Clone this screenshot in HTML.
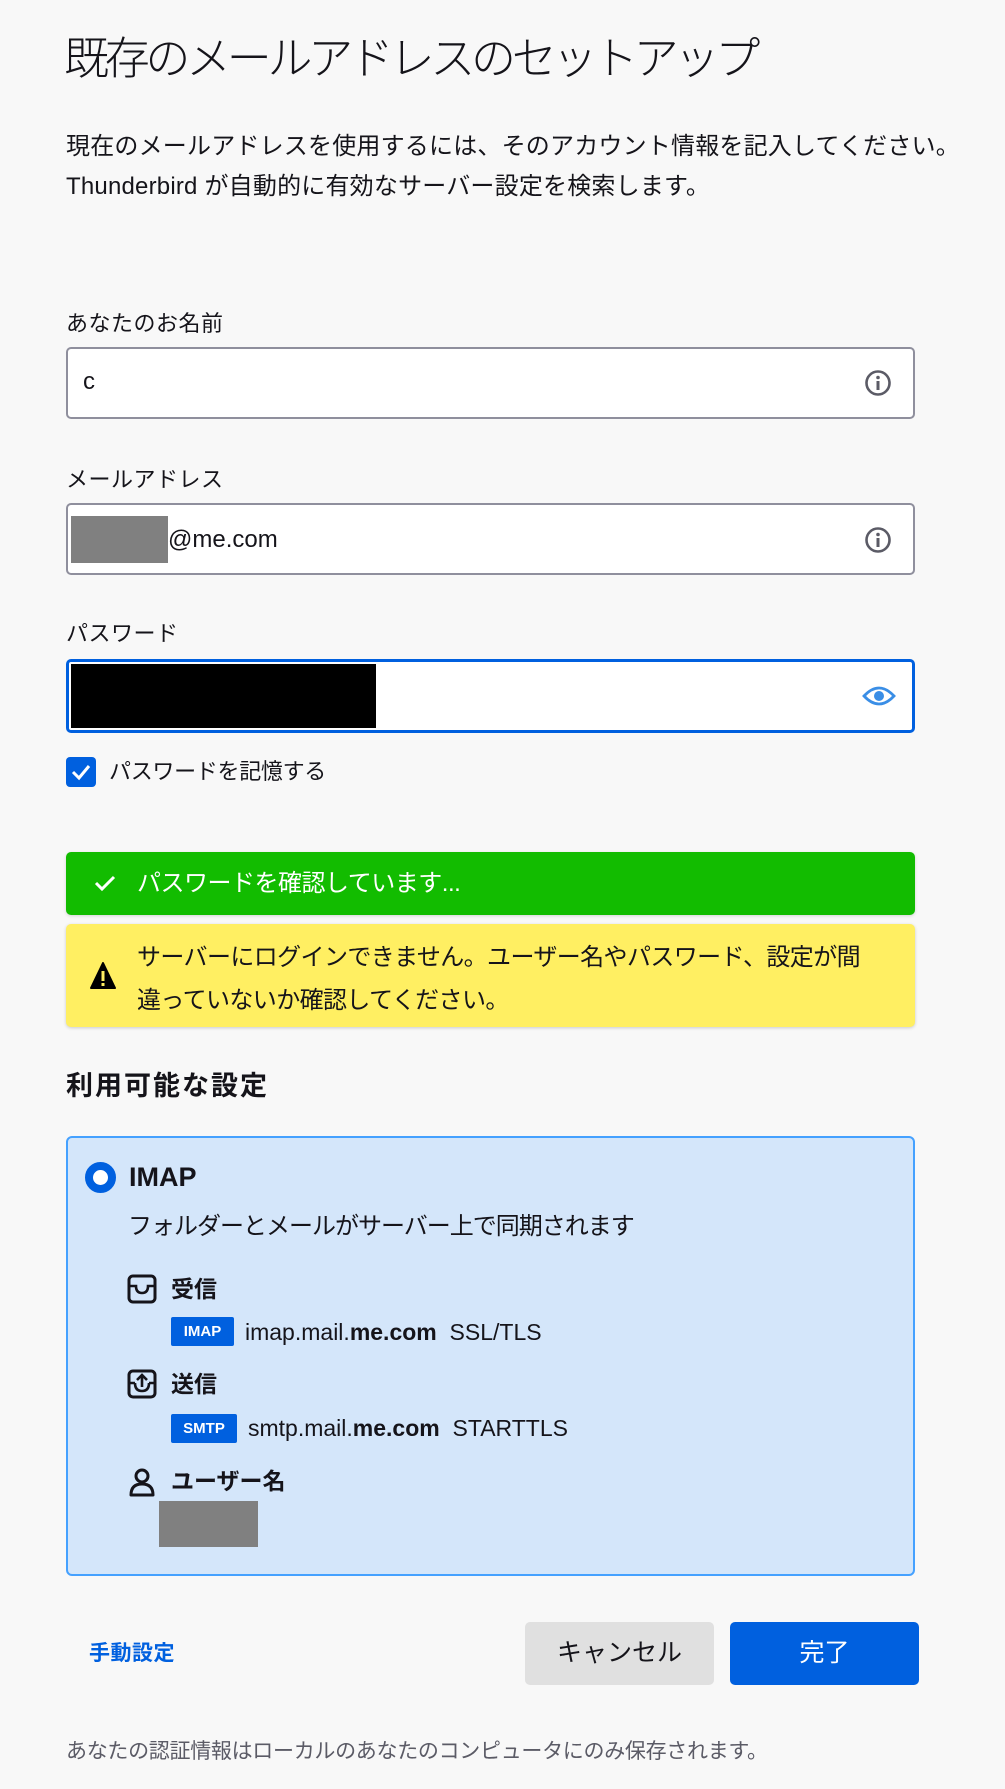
<!DOCTYPE html>
<html><head><meta charset="utf-8"><style>
*{margin:0;padding:0;box-sizing:border-box}
body{width:1005px;height:1789px;background:#f8f8f8;font-family:"Liberation Sans","Noto Sans CJK JP",sans-serif;color:#15141a;position:relative;overflow:hidden}
.a{position:absolute;white-space:nowrap}
.inp{position:absolute;left:66px;width:849px;height:72px;background:#fff;border:2px solid #8f8f9d;border-radius:5px}
.lbl{font-size:22px;line-height:30px;letter-spacing:0.5px}
.badge{position:absolute;background:#0060df;color:#fff;font-size:15px;font-weight:bold;text-align:center;border-radius:2px;line-height:29px}
</style></head><body>
<div class="a" style="left:64px;top:29px;font-size:45px;font-weight:300;line-height:60px;letter-spacing:-4.3px">既存のメールアドレスのセットアップ</div>
<div class="a" style="left:66px;top:127px;font-size:24px;line-height:40px;letter-spacing:0.2px">現在のメールアドレスを使用するには、そのアカウント情報を記入してください。<br>Thunderbird が自動的に有効なサーバー設定を検索します。</div>

<div class="a lbl" style="left:66px;top:309px">あなたのお名前</div>
<div class="inp" style="top:347px"></div>
<div class="a" style="left:83px;top:367px;font-size:24px;line-height:30px">c</div>
<svg class="a" style="left:864px;top:369px" width="28" height="28" viewBox="0 0 28 28"><circle cx="14" cy="14" r="11.5" fill="none" stroke="#5b5b66" stroke-width="2.6"/><circle cx="14" cy="8.5" r="1.8" fill="#5b5b66"/><rect x="12.5" y="12" width="3" height="9" fill="#5b5b66"/></svg>

<div class="a lbl" style="left:66px;top:465px">メールアドレス</div>
<div class="inp" style="top:503px"></div>
<div class="a" style="left:71px;top:516px;width:97px;height:47px;background:#808080"></div>
<div class="a" style="left:168px;top:525px;font-size:24px;line-height:30px">@me.com</div>
<svg class="a" style="left:864px;top:526px" width="28" height="28" viewBox="0 0 28 28"><circle cx="14" cy="14" r="11.5" fill="none" stroke="#5b5b66" stroke-width="2.6"/><circle cx="14" cy="8.5" r="1.8" fill="#5b5b66"/><rect x="12.5" y="12" width="3" height="9" fill="#5b5b66"/></svg>

<div class="a lbl" style="left:66px;top:619px">パスワード</div>
<div class="inp" style="top:659px;height:74px;border:3px solid #0060df"></div>
<div class="a" style="left:71px;top:664px;width:305px;height:64px;background:#000"></div>
<svg class="a" style="left:862px;top:683px" width="34" height="26" viewBox="0 0 34 26"><path d="M2 13 Q17 -3 32 13 Q17 29 2 13Z" fill="none" stroke="#3a8ee6" stroke-width="2.8"/><circle cx="17" cy="13" r="5" fill="#3a8ee6"/></svg>

<div class="a" style="left:66px;top:757px;width:30px;height:30px;background:#0060df;border-radius:4px"></div>
<svg class="a" style="left:66px;top:757px" width="30" height="30"><path d="M7 15 L13 21 L23 9" fill="none" stroke="#fff" stroke-width="3"/></svg>
<div class="a lbl" style="left:109px;top:757px;letter-spacing:-0.3px">パスワードを記憶する</div>

<div class="a" style="left:66px;top:852px;width:849px;height:63px;background:#12bc00;border-radius:5px;box-shadow:0 1px 3px rgba(0,0,0,.15)"></div>
<svg class="a" style="left:93px;top:873px" width="24" height="20"><path d="M3 10 L9 16 L21 4" fill="none" stroke="#fff" stroke-width="3"/></svg>
<div class="a" style="left:137px;top:868px;font-size:24px;line-height:32px;color:#fff;letter-spacing:-0.5px">パスワードを確認しています...</div>

<div class="a" style="left:66px;top:924px;width:849px;height:103px;background:#ffef62;border-radius:5px;box-shadow:0 1px 3px rgba(0,0,0,.18)"></div>
<svg class="a" style="left:90px;top:962px" width="26" height="28" viewBox="0 0 26 28"><path d="M13 1 L25 26 L1 26Z" fill="#000" stroke="#000" stroke-width="2" stroke-linejoin="round"/><rect x="11.5" y="9" width="3" height="10" fill="#ffef62"/><rect x="11.5" y="21" width="3" height="3" fill="#ffef62"/></svg>
<div class="a" style="left:137px;top:936px;font-size:24px;line-height:43px;letter-spacing:-0.6px">サーバーにログインできません。ユーザー名やパスワード、設定が間<br>違っていないか確認してください。</div>

<div class="a" style="left:66px;top:1068px;font-size:27px;font-weight:bold;line-height:36px;letter-spacing:2px">利用可能な設定</div>

<div class="a" style="left:66px;top:1136px;width:849px;height:440px;background:#d4e6fa;border:2px solid #45a1ff;border-radius:6px"></div>
<div class="a" style="left:85px;top:1162px;width:31px;height:31px;border-radius:50%;border:8px solid #0060df;background:#fff"></div>
<div class="a" style="left:129px;top:1160px;font-size:27px;font-weight:600;line-height:34px">IMAP</div>
<div class="a" style="left:128px;top:1211px;font-size:24px;line-height:32px;letter-spacing:-1px">フォルダーとメールがサーバー上で同期されます</div>

<svg class="a" style="left:127px;top:1274px" width="30" height="30" viewBox="0 0 30 30"><rect x="2" y="2" width="26" height="26" rx="4" fill="none" stroke="#15141a" stroke-width="3"/><path d="M3 12 H9 Q9 19 15 19 Q21 19 21 12 H27" fill="none" stroke="#15141a" stroke-width="2.6"/></svg>
<div class="a" style="left:171px;top:1273px;font-size:23px;font-weight:bold;line-height:32px">受信</div>
<div class="badge" style="left:171px;top:1317px;width:63px">IMAP</div>
<div class="a" style="left:245px;top:1316px;font-size:23px;line-height:32px">imap.mail.<b>me.com</b>&nbsp; SSL/TLS</div>

<svg class="a" style="left:127px;top:1369px" width="30" height="30" viewBox="0 0 30 30"><rect x="2" y="2" width="26" height="26" rx="4" fill="none" stroke="#15141a" stroke-width="3"/><path d="M3 14 H8 M22 14 H27 M8 14 Q8 22 15 22 Q22 22 22 14" fill="none" stroke="#15141a" stroke-width="2.6"/><path d="M15 18 V6 M10 11 L15 6 L20 11" fill="none" stroke="#15141a" stroke-width="2.6"/></svg>
<div class="a" style="left:171px;top:1368px;font-size:23px;font-weight:bold;line-height:32px">送信</div>
<div class="badge" style="left:171px;top:1414px;width:66px">SMTP</div>
<div class="a" style="left:248px;top:1412px;font-size:23px;line-height:32px">smtp.mail.<b>me.com</b>&nbsp; STARTTLS</div>

<svg class="a" style="left:128px;top:1467px" width="28" height="30" viewBox="0 0 28 30"><circle cx="14" cy="9" r="6" fill="none" stroke="#15141a" stroke-width="3"/><path d="M3 28 Q3 17 14 17 Q25 17 25 28 Z" fill="none" stroke="#15141a" stroke-width="3" stroke-linejoin="round"/></svg>
<div class="a" style="left:171px;top:1465px;font-size:23px;font-weight:bold;line-height:32px">ユーザー名</div>
<div class="a" style="left:159px;top:1501px;width:99px;height:46px;background:#808080"></div>

<div class="a" style="left:89px;top:1640px;font-size:21px;font-weight:bold;color:#0060df;line-height:28px;letter-spacing:0.5px">手動設定</div>
<div class="a" style="left:525px;top:1622px;width:189px;height:63px;background:#e0e0e0;border-radius:5px;font-size:25px;line-height:63px;text-align:center">キャンセル</div>
<div class="a" style="left:730px;top:1622px;width:189px;height:63px;background:#0060df;border-radius:5px;font-size:25px;line-height:63px;text-align:center;color:#fff">完了</div>

<div class="a" style="left:66px;top:1738px;font-size:21px;line-height:28px;color:#5b5b66;letter-spacing:-0.3px">あなたの認証情報はローカルのあなたのコンピュータにのみ保存されます。</div>
</body></html>
